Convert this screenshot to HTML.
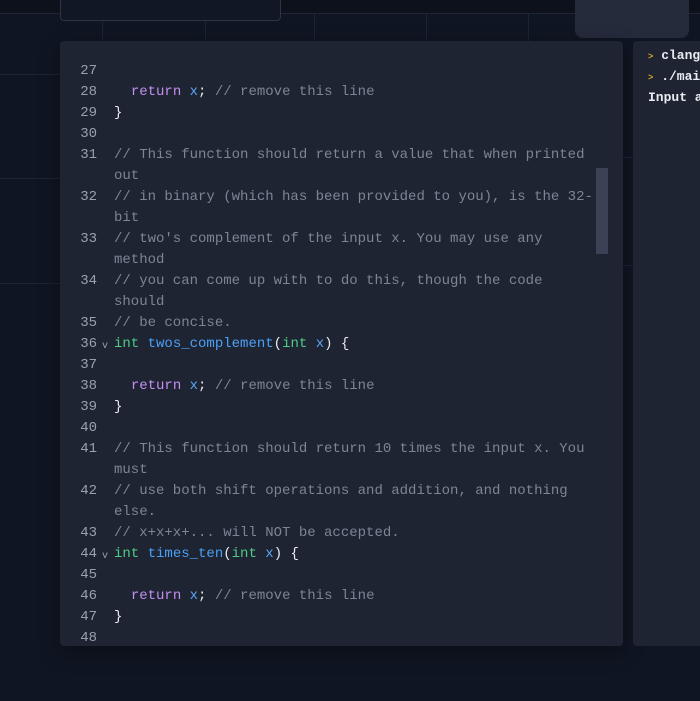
<!DOCTYPE html>
<html><head><style>
html,body{margin:0;padding:0;width:700px;height:701px;overflow:hidden;background:#0f1522;}
.top{position:absolute;left:0;top:0;width:700px;height:13px;background:#0c111c;border-bottom:1px solid #1f2636;}
.gl{position:absolute;background:#1c2332;}
.box1{position:absolute;left:60px;top:0;width:219px;height:20px;border:1px solid #2c3446;border-top:none;border-radius:0 0 4px 4px;background:#111725;}
.box2{position:absolute;left:575px;top:0;width:114px;height:38px;background:#252b3b;border-radius:0 0 8px 8px;}
.ed{position:absolute;left:60px;top:41px;width:563px;height:605px;background:#1f2433;border-radius:4px;box-shadow:0 6px 20px rgba(0,0,0,.35);}
.rp{position:absolute;left:633px;top:41px;width:80px;height:605px;background:#1f2433;border-radius:4px;}
.code{position:absolute;left:0;top:61px;font-family:"Liberation Mono",monospace;font-size:14px;line-height:21px;color:#7d8594;}
.l{height:21px;position:relative;}
.n{position:absolute;left:60px;width:37px;text-align:right;color:#99a1ae;}
.t{position:absolute;left:114px;white-space:pre;}
.f{position:absolute;left:102px;font-size:10px;color:#99a1ae;top:2px;}
.r{color:#c38ff0}.x{color:#5aa6f5}.k{color:#4ecb85}.fn{color:#4aa0f5}.w{color:#e8ecf2}.c{color:#7d8594}
.sb{position:absolute;left:596px;top:168px;width:12px;height:86px;background:#3b4256;}
.term{position:absolute;left:648px;top:46px;font-family:"Liberation Mono",monospace;font-size:13px;line-height:19px;color:#e8ecf2;font-weight:bold;white-space:pre;}
.term b{color:#c9a227;font-size:9px;}
</style></head><body>
<div class="top"></div>
<div class="gl" style="left:0;top:74px;width:60px;height:1px"></div>
<div class="gl" style="left:0;top:178px;width:60px;height:1px"></div>
<div class="gl" style="left:0;top:283px;width:60px;height:1px"></div>
<div class="gl" style="left:102px;top:20px;width:1px;height:21px"></div>
<div class="gl" style="left:205px;top:20px;width:1px;height:21px"></div>
<div class="gl" style="left:314px;top:14px;width:1px;height:27px"></div>
<div class="gl" style="left:426px;top:14px;width:1px;height:27px"></div>
<div class="gl" style="left:528px;top:14px;width:1px;height:27px"></div>
<div class="gl" style="left:623px;top:157px;width:10px;height:1px"></div>
<div class="gl" style="left:623px;top:265px;width:10px;height:1px"></div>
<div class="box1"></div>
<div class="box2"></div>
<div class="ed"></div>
<div class="rp"></div>
<div class="sb"></div>
<div class="code">
<div class="l"><span class="n">27</span></div>
<div class="l"><span class="n">28</span><span class="t">  <span class="r">return</span> <span class="x">x</span><span class="w">;</span> // remove this line</span></div>
<div class="l"><span class="n">29</span><span class="t w">}</span></div>
<div class="l"><span class="n">30</span></div>
<div class="l"><span class="n">31</span><span class="t">// This function should return a value that when printed</span></div>
<div class="l"><span class="t">out</span></div>
<div class="l"><span class="n">32</span><span class="t">// in binary (which has been provided to you), is the 32-</span></div>
<div class="l"><span class="t">bit</span></div>
<div class="l"><span class="n">33</span><span class="t">// two's complement of the input x. You may use any</span></div>
<div class="l"><span class="t">method</span></div>
<div class="l"><span class="n">34</span><span class="t">// you can come up with to do this, though the code</span></div>
<div class="l"><span class="t">should</span></div>
<div class="l"><span class="n">35</span><span class="t">// be concise.</span></div>
<div class="l"><span class="n">36</span><span class="f">v</span><span class="t"><span class="k">int</span> <span class="fn">twos_complement</span><span class="w">(</span><span class="k">int</span> <span class="x">x</span><span class="w">) {</span></span></div>
<div class="l"><span class="n">37</span></div>
<div class="l"><span class="n">38</span><span class="t">  <span class="r">return</span> <span class="x">x</span><span class="w">;</span> // remove this line</span></div>
<div class="l"><span class="n">39</span><span class="t w">}</span></div>
<div class="l"><span class="n">40</span></div>
<div class="l"><span class="n">41</span><span class="t">// This function should return 10 times the input x. You</span></div>
<div class="l"><span class="t">must</span></div>
<div class="l"><span class="n">42</span><span class="t">// use both shift operations and addition, and nothing</span></div>
<div class="l"><span class="t">else.</span></div>
<div class="l"><span class="n">43</span><span class="t">// x+x+x+... will NOT be accepted.</span></div>
<div class="l"><span class="n">44</span><span class="f">v</span><span class="t"><span class="k">int</span> <span class="fn">times_ten</span><span class="w">(</span><span class="k">int</span> <span class="x">x</span><span class="w">) {</span></span></div>
<div class="l"><span class="n">45</span></div>
<div class="l"><span class="n">46</span><span class="t">  <span class="r">return</span> <span class="x">x</span><span class="w">;</span> // remove this line</span></div>
<div class="l"><span class="n">47</span><span class="t w">}</span></div>
<div class="l"><span class="n">48</span></div>
</div>
<div class="term"><b>&gt;</b> clang
<b>&gt;</b> ./main
Input a</div>
</body></html>
